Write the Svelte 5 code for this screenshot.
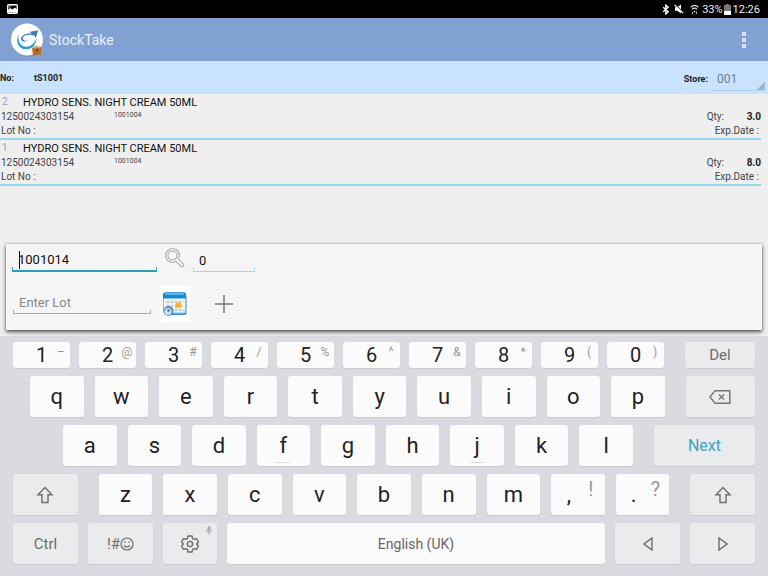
<script>

    // Counted items
    const items = [
        { line: 2, name: "HYDRO SENS. NIGHT CREAM 50ML", barcode: "1250024303154", code: "1001004", qty: "3.0" },
        { line: 1, name: "HYDRO SENS. NIGHT CREAM 50ML", barcode: "1250024303154", code: "1001004", qty: "8.0" },
    ];

    // Keyboard keys
    const numbers = [
        ["1", "–"], ["2", "@"], ["3", "#"], ["4", "/"], ["5", "%"],
        ["6", "^"], ["7", "&"], ["8", "*"], ["9", "("], ["0", ")"],
    ];
    const top = [..."qwertyuiop"];
    const home = [..."asdfghjkl"];
    const bottom = [..."zxcvbnm"];

    let item = "1001014";
    let quantity = "0";
    let lot = "";
    let store = "001";

</script>

<div class="screen">

    <!-- Status bar -->
    <div class="status">
        <svg class="picture" width="11" height="10" viewBox="0 0 11 10">
            <rect x=".7" y=".7" width="9.6" height="8.6" rx="1" fill="none" stroke="#fff" stroke-width="1.4" />
            <path d="M1 8.5V6l2.3-2 2 1.6L8 3.6l2 2v3z" fill="#fff" />
            <circle cx="3" cy="2.8" r=".7" fill="#fff" />
        </svg>
        <div class="indicators">
            <svg width="8" height="11" viewBox="0 0 8 11" fill="none" stroke="#fff" stroke-width="1.3">
                <path d="M1.2 3.2l5 4.6L3.8 10V1l2.4 2.2-5 4.6" />
            </svg>
            <svg class="mute" width="10" height="10" viewBox="0 0 10 10">
                <path d="M1 3.2h2.2L7 .6v8.8L3.2 6.8H1z" fill="#fff" />
                <path d="M1.6 .8l8 7.4" stroke="#000" stroke-width="1" />
                <path d="M.6.9l8.6 8.2" stroke="#fff" stroke-width="1.3" />
            </svg>
            <svg class="wifi" width="9" height="11" viewBox="0 0 9 11" fill="none" stroke="#ddd" stroke-width="1.2">
                <path d="M.7 3.2Q4.5-.3 8.3 3.2M2 5.2q2.500-2.300 5 0" />
                <path d="M3.300 6.900h2.400L4.500 8.400z" fill="#fff" stroke="none" />
                <path d="M2.500 8v2.500M6.500 7.500V10" stroke="#aaa" />
            </svg>
            <span>33%</span>
            <svg class="battery" width="7" height="11" viewBox="0 0 7 11">
                <path d="M2.200 0h2.600v1H7v10H0V1h2.200z" fill="#777" />
                <path d="M0 7h7v4H0z" fill="#fff" />
            </svg>
            <span>12:26</span>
        </div>
    </div>

    <!-- App bar -->
    <header class="app-bar">
        <svg class="logo" width="34" height="34" viewBox="0 0 34 34">
            <circle cx="17" cy="17.500" r="16" fill="#5f7fae" opacity=".5" />
            <circle cx="17" cy="16.500" r="16" fill="#fff" />
            <path d="M8.500 11.500C5 19 9 26.800 16.500 26.300c6.500-.4 9.800-5.300 10-11.300-2 5.500-5.500 8.600-10 8.700-6 .1-8.900-5.700-8-12.200z" fill="#2f9bd0" />
            <path d="M12 13.500c2.500-3 6.500-3.600 10.500-2.800L19.500 9l8.700-1.800-2.400 8-1.500-2.800c-4.300-1.200-9.300-1-11 1.500-1.600 2.600.7 4.400 5 3.700-4.600 2.600-9.400-.2-6.300-4.100z" fill="#4379b6" />
            <path d="M22 25l9-1v7.500l-8 1z" fill="#b76d24" />
            <path d="M22 25l3-2.200 6 1.200-3 2z" fill="#dfa25a" />
            <path d="M26 25.500l2-.3v3l-2 .3z" fill="#72401b" />
        </svg>
        <h1>StockTake</h1>
        <button class="overflow" aria-label="More options">
            <svg width="4" height="16" viewBox="0 0 4 16" fill="#d4e3f5">
                <rect width="4" height="4" /><rect y="6" width="4" height="4" /><rect y="12" width="4" height="4" />
            </svg>
        </button>
    </header>

    <!-- Document -->
    <div class="document">
        <span class="number">No:</span>
        <span>tS1001</span>
        <label for="store">Store:</label>
        <div class="store">
            <select id="store" bind:value={store}>
                <option>001</option>
            </select>
        </div>
    </div>

    <!-- Items -->
    <ul class="items">
        {#each items as row}
            <li>
                <div class="title"><span class="line">{row.line}</span>{row.name}</div>
                <div class="detail">
                    <span class="barcode">{row.barcode}</span>
                    <span class="code">{row.code}</span>
                    <span>Qty:</span>
                    <b>{row.qty}</b>
                </div>
                <div class="lot"><span>Lot No :</span><span>Exp.Date :</span></div>
            </li>
        {/each}
    </ul>

    <!-- Entry form -->
    <form class="entry" on:submit|preventDefault>
        <div class="field focused">
            <input aria-label="Item code" bind:value={item} />
            <span class="caret"></span>
        </div>
        <button class="search" type="button" aria-label="Search">
            <svg width="20" height="20" viewBox="0 0 20 20" fill="none">
                <path d="M12 12l5 5" stroke="#999" stroke-width="4.500" stroke-linecap="round" />
                <circle cx="7.500" cy="7.500" r="5.700" stroke="#999" stroke-width="3.200" />
                <circle cx="7.500" cy="7.500" r="5.700" stroke="#f5f5f5" stroke-width="1.400" />
                <path d="M12 12l5 5" stroke="#f5f5f5" stroke-width="2.600" stroke-linecap="round" />
            </svg>
        </button>
        <div class="field quantity">
            <input aria-label="Quantity" bind:value={quantity} />
        </div>
        <div class="field plain">
            <input aria-label="Lot" placeholder="Enter Lot" bind:value={lot} />
        </div>
        <button class="calendar" type="button" aria-label="Expiry date">
            <svg width="26" height="26" viewBox="0 0 26 26">
                <rect x="2" y="3" width="22.500" height="21" rx="2.500" fill="#3b8ed0" />
                <rect x="1.500" y="1.500" width="22" height="20.500" rx="2" fill="#f7fbff" stroke="#78bce9" />
                <path d="M1 7.500V4q0-2.500 2.500-2.500h18Q24 1.500 24 4v3.500z" fill="#1688d4" />
                <path d="M3 3h19" stroke="#73c5f2" stroke-width="1.500" />
                <path d="M3 11h19M3 15h19M3 19h19M6 8.500V22M10 8.500V22M14 8.500V22M18 8.500V22" stroke="#b9c4cd" stroke-width=".9" />
                <rect x="13.500" y="11.500" width="5.500" height="5" fill="#ffae24" />
                <path d="M19 22.500l4-.5.500-4z" fill="#b8daf3" />
                <circle cx="6.500" cy="20" r="5" fill="#5c8cc4" />
                <circle cx="6" cy="20.500" r="3.500" fill="#c9e0f5" />
                <path d="M6 18V20.500l2-1.500" stroke="#24558e" fill="none" />
            </svg>
        </button>
        <button class="add" aria-label="Add">
            <svg width="18" height="18" viewBox="0 0 18 18"><path d="M9 0v18M0 9h18" stroke="#777" stroke-width="1.500" /></svg>
        </button>
    </form>

    <!-- Keyboard -->
    <div class="keyboard">

        <div class="row numbers">
            {#each numbers as [key, alt]}
                <button class="key">{key}<small>{alt}</small></button>
            {/each}
            <button class="key action apart">Del</button>
        </div>

        <div class="row top">
            {#each top as key}
                <button class="key">{key}</button>
            {/each}
            <button class="key action apart delete" aria-label="Backspace">
                <svg width="22" height="14" viewBox="0 0 22 14" fill="none" stroke="#727375" stroke-width="1.400">
                    <path d="M6 .8h14.800v12.400H6L1 7zM10 4.500l5 5M15 4.500l-5 5" />
                </svg>
            </button>
        </div>

        <div class="row home">
            {#each home as key}
                <button class="key" class:bump={key === "f" || key === "j"}>{key}</button>
            {/each}
            <button class="key action apart next">Next</button>
        </div>

        <div class="row">
            <button class="key action shift" aria-label="Shift">
                <svg width="18" height="18" viewBox="0 0 18 18" fill="none" stroke="#6c6d6f" stroke-width="1.400">
                    <path d="M9 1.500l7 7.300h-4V16.500H6V8.800H2z" />
                </svg>
            </button>
            {#each bottom as key, i}
                <button class="key" class:apart={i === 0}>{key}</button>
            {/each}
            <button class="key mark">,<small>!</small></button>
            <button class="key mark">.<small>?</small></button>
            <button class="key action shift apart" aria-label="Right shift">
                <svg width="18" height="18" viewBox="0 0 18 18" fill="none" stroke="#6c6d6f" stroke-width="1.400">
                    <path d="M9 1.500l7 7.300h-4V16.500H6V8.800H2z" />
                </svg>
            </button>
        </div>

        <div class="row last">
            <button class="key action">Ctrl</button>
            <button class="key action">!#<svg width="14" height="14" viewBox="0 0 14 14" fill="none" stroke="#6c6d6f" stroke-width="1.200">
                <circle cx="7" cy="7" r="6" />
                <path d="M4 8.500q3 3.200 6 0" />
                <path d="M4.900 4.200v1.600M9.100 4.200v1.600" stroke-width="1.300" />
            </svg></button>
            <button class="key action settings" aria-label="Keyboard settings">
                <svg width="18" height="18" viewBox="0 0 18 18" fill="none" stroke="#6c6d6f" stroke-width="1.400" stroke-linejoin="round">
                    <path d="M7 1h4l.6 2.400 1.500.9 2.400-.7 2 3.400L15.700 8.700v.6l1.800 1.700-2 3.400-2.400-.7-1.500.9L11 17H7l-.6-2.400-1.500-.9-2.400.7-2-3.400 1.800-1.700v-.6L.5 7l2-3.400 2.400.7 1.500-.9z" />
                    <circle cx="9" cy="9" r="2.600" />
                </svg>
                <svg class="mic" width="6" height="9" viewBox="0 0 6 9" fill="none" stroke="#aaa">
                    <rect x="2" y=".5" width="2" height="4.500" rx="1" fill="#aaa" />
                    <path d="M.5 3.500q0 3 2.500 3t2.500-3M3 6.500V9" />
                </svg>
            </button>
            <button class="key space">English (UK)</button>
            <button class="key action" aria-label="Left">
                <svg width="10" height="14" viewBox="0 0 10 14" fill="none" stroke="#6c6d6f" stroke-width="1.400"><path d="M9 1v12L1 7z" /></svg>
            </button>
            <button class="key action" aria-label="Right">
                <svg width="10" height="14" viewBox="0 0 10 14" fill="none" stroke="#6c6d6f" stroke-width="1.400"><path d="M1 1v12l8-6z" /></svg>
            </button>
        </div>

    </div>

</div>

<style>

    :global(body) {
        margin: 0;
        background: #dadbe1;
    }

    .screen {
        display: flex;
        flex-direction: column;
        min-height: 100vh;
        background: #efefef;
        color: #222;
        font-family: Roboto, sans-serif;
    }

    button, input, select {
        margin: 0;
        padding: 0;
        border: 0;
        background: none;
        color: inherit;
        font: inherit;
    }

    svg {
        flex: none;
        display: block;
    }

    /* Status bar */
    .status {
        display: flex;
        align-items: center;
        justify-content: space-between;
        height: 18px;
        padding: 0 8px 0 7px;
        background: #000;
        color: #eee;
        font-size: 11px;
    }

    .indicators {
        display: flex;
        align-items: center;
    }

    .mute {
        margin: 0 6px 0 4px;
    }

    .wifi {
        margin-right: 3px;
    }

    .battery {
        margin: 0 2px 0 1px;
    }

    /* App bar */
    .app-bar {
        display: flex;
        align-items: center;
        gap: 5px;
        height: 43px;
        padding: 0 16px 0 10px;
        box-sizing: border-box;
        background: #81a1d3;
        color: #e8f0fb;
    }

    h1 {
        margin: 0;
        font-size: 14px;
        font-weight: 400;
    }

    .overflow {
        margin-left: auto;
        padding: 4px 6px;
    }

    /* Document */
    .document {
        display: flex;
        align-items: center;
        height: 33px;
        background: #c9e3ff;
        font-size: 9px;
        font-weight: 700;
    }

    .number {
        width: 34px;
    }

    .document label {
        margin-left: auto;
        padding: 2px 4px 0 0;
        font-size: 9px;
    }

    .store {
        width: 53px;
        margin-right: 3px;
        align-self: stretch;
        display: flex;
        margin-bottom: 3px;
        border-bottom: 1px solid #b5d0e6;
        background: linear-gradient(135deg, transparent 50%, #9cb9cf 50%) right bottom / 9px 9px no-repeat;
    }

    .store select {
        appearance: none;
        width: 100%;
        padding: 6px 0 0 5px;
        color: #6a7d91;
        font-size: 12px;
        font-weight: 400;
    }

    /* Items */
    .items {
        flex: 1;
        margin: 0;
        padding: 0 7px 0 0;
        list-style: none;
        font-size: 10px;
        color: #444;
    }

    .items li {
        padding-top: 1px;
        border-bottom: 2px solid #93d7ea;
    }

    .title {
        display: flex;
        line-height: 15px;
        color: #111;
        font-size: 11px;
    }

    .line {
        width: 21px;
        padding-left: 2px;
        color: #8ba8d6;
        font-size: 10px;
        line-height: 13px;
    }

    .detail, .lot {
        display: flex;
        padding-left: 1px;
        line-height: 14px;
    }

    .barcode {
        width: 113px;
    }

    .code {
        flex: 1;
        font-size: 7px;
        line-height: 10px;
    }

    .detail b {
        width: 37px;
        text-align: right;
        color: #222;
    }

    .lot {
        justify-content: space-between;
        padding-right: 2px;
    }

    /* Entry form */
    .entry {
        display: grid;
        grid-template-columns: 145px 30px 62px;
        grid-template-rows: 28px 36px;
        column-gap: 3px;
        row-gap: 14px;
        margin: 0 6px 6px;
        padding: 0 6px 8px;
        background: #f5f5f5;
        box-shadow: 0 0 2px rgba(0, 0, 0, .3), 0 2px 4px rgba(0, 0, 0, .65);
    }

    .field {
        --underline: #aaa;
        position: relative;
        align-self: start;
        display: flex;
        height: 28px;
        box-sizing: border-box;
        border-bottom: 1px solid var(--underline);
        background:
            linear-gradient(var(--underline), var(--underline)) left bottom / 1px 3px no-repeat,
            linear-gradient(var(--underline), var(--underline)) right bottom / 1px 3px no-repeat;
    }

    .focused {
        --underline: #2b9db9;
        border-bottom-width: 2px;
    }

    .quantity {
        --underline: #9ad8ea;
    }

    .plain {
        width: 138px;
        margin-left: 1px;
    }

    .field input {
        width: 100%;
        padding: 5px 6px 0;
        box-sizing: border-box;
        outline: 0;
        color: #111;
        font-size: 13px;
    }

    .field input::placeholder {
        color: #888;
        opacity: 1;
    }

    .caret {
        position: absolute;
        top: 7px;
        left: 7px;
        width: 1px;
        height: 18px;
        background: #111;
    }

    .search {
        display: flex;
        align-items: center;
        justify-content: center;
    }

    .calendar {
        display: flex;
        align-items: center;
        justify-content: center;
        background: #fff;
    }

    .add {
        display: flex;
        align-items: center;
        justify-content: center;
    }

    /* Keyboard */
    .keyboard {
        display: flex;
        flex-direction: column;
        gap: 8px;
        padding: 6px 13px 12px;
        background: #dadbe1;
    }

    .row {
        display: flex;
        gap: 11px;
        height: 41px;
    }

    .numbers {
        gap: 9px;
        height: 26px;
    }

    .row.top {
        padding-left: 17px;
    }

    .home {
        padding-left: 50px;
    }

    .last {
        gap: 10px;
    }

    .key {
        position: relative;
        display: flex;
        align-items: center;
        justify-content: center;
        flex: 54 1 0;
        min-width: 0;
        border-radius: 3px;
        background: #fbfbfb;
        box-shadow: 0 1px 1px rgba(0, 0, 0, .08);
        color: #222;
        font-size: 22px;
    }

    .numbers .key {
        flex-grow: 57;
        font-size: 20px;
    }

    .key.action {
        flex-grow: 65;
        background: #eaebed;
        color: #6c6d6f;
        font-size: 15px;
    }

    .numbers .action, .key.delete {
        flex-grow: 70;
    }

    .key.next {
        flex-grow: 102;
        color: #439fbd;
        font-size: 16px;
    }

    .key.settings {
        flex-grow: 54;
    }

    .key.space {
        flex-grow: 378;
        color: #666;
        font-size: 14px;
    }

    .apart {
        margin-left: 10px;
    }

    .numbers .apart {
        margin-left: 12px;
    }

    /* Alternate character */
    .key small {
        position: absolute;
        top: 2px;
        right: 3px;
        width: 12px;
        color: #999;
        font-size: 12px;
        line-height: 16px;
    }

    .mark::after {
        content: "";
        width: 18px;
    }

    .key.mark small {
        top: 4px;
        right: 8px;
        font-size: 20px;
        line-height: 22px;
        text-align: center;
    }

    .mic {
        position: absolute;
        top: 3px;
        right: 5px;
    }

    /* Finger position mark */
    .bump::after {
        content: "";
        position: absolute;
        bottom: 3px;
        width: 14px;
        height: 1px;
        background: #ddd;
    }

</style>
